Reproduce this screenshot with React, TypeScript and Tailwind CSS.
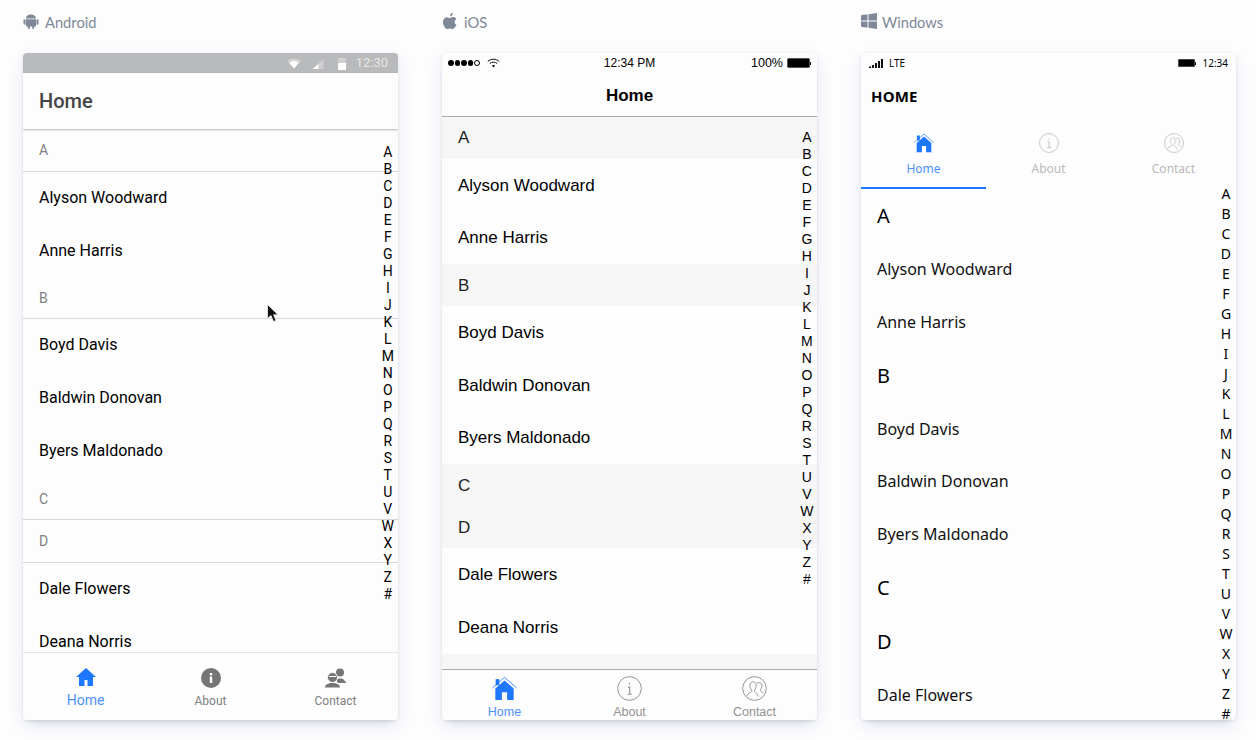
import type { ReactNode } from 'react'

const letters = 'ABCDEFGHIJKLMNOPQRSTUVWXYZ#'.split('')

// list data, same for every platform
// androidHeight: the android headers are not all the same height in the capture
const sections = [
  { title: 'A', androidHeight: 'h-[43px]', names: ['Alyson Woodward', 'Anne Harris'] },
  { title: 'B', androidHeight: 'h-[41px]', names: ['Boyd Davis', 'Baldwin Donovan', 'Byers Maldonado'] },
  { title: 'C', androidHeight: 'h-[42px]', names: [] },
  { title: 'D', androidHeight: 'h-[43px]', names: ['Dale Flowers', 'Deana Norris'] },
]

const BLUE = '#1e78ff'

function HomeSolid({ size }: { size: number }) {
  return (
    <svg width={size} height={size} viewBox="0 0 24 24" fill={BLUE}>
      <path d="M12 3 2 12h3v9h5.500v-6h3v6H19v-9h3z" />
    </svg>
  )
}

// iOS / Windows variant: thin roof line over the house, chimney on the left
function HomeRoof({ size }: { size: number }) {
  return (
    <svg width={size} height={size} viewBox="0 0 24 24" fill={BLUE}>
      <path d="M12 4.300 3.200 12v11h6.300v-7.500h5V23h6.300V12z" />
      <rect x="3.500" y="3" width="3.500" height="6" />
      <path d="M.4 11.500 12 1.300l11.600 10.200" fill="none" stroke={BLUE} strokeWidth="0.8" />
    </svg>
  )
}

function InfoOutline({ size, color }: { size: number; color: string }) {
  return (
    <svg width={size} height={size} viewBox="0 0 26 26" fill="none" stroke={color}>
      <circle cx="13" cy="13" r="12.300" strokeWidth="1" />
      <path d="M13 7v1.800M11.300 11.500H13.200V19M11 19h4.400" strokeWidth="1.200" />
    </svg>
  )
}

function ContactOutline({ size, color }: { size: number; color: string }) {
  return (
    <svg width={size} height={size} viewBox="0 0 26 26" fill="none" stroke={color} strokeWidth="1">
      <circle cx="13" cy="13" r="12.300" />
      <path d="M5 20.500c.5-2.500 4-3 5-4.500.3-.8 0-1.500-.8-2.500C8.300 12 8 10 8.500 8.500 9 6.800 10.200 6 11.500 6s2.500.8 3 2.500c.5 1.500.2 3.500-.7 5-.8 1-1.100 1.700-.8 2.500 1 1.500 3.500 2 4 5.500" />
      <path d="M15.500 7.800c.8-.8 1.600-1 2.300-1 1.500 0 2.500 1 2.800 2.400.3 1.600 0 3-.8 4.100-.7 1-.8 1.500-.5 2.300.6.900 1.800 1.200 2.800 2.300" />
    </svg>
  )
}

function Index({ className, rowClass }: { className: string; rowClass: string }) {
  return (
    <div className={`absolute flex flex-col items-center text-black ${className}`}>
      {letters.map((l) => (
        <div key={l} className={rowClass}>
          {l}
        </div>
      ))}
    </div>
  )
}

function PhoneCard({ children }: { children: ReactNode }) {
  return (
    <div className="relative flex h-[667px] w-[375px] flex-col overflow-hidden rounded-[4px] bg-[#fdfdfe] shadow-[0_1px_3px_rgba(80,90,110,0.16)]">
      {children}
    </div>
  )
}

function Column({ icon, label, children }: { icon: ReactNode; label: string; children: ReactNode }) {
  return (
    <div className="flex w-[375px] flex-col">
      <div className="flex h-[53px] items-start gap-[5px] pt-[13px] font-['Lato',sans-serif] text-[14.700px] leading-[18px] text-[#7f8896]">
        {icon}
        <span>{label}</span>
      </div>
      <div className="rounded-[14px] shadow-[0_8px_6px_-4px_rgba(90,100,125,0.15),0_6px_10px_8px_rgba(125,140,185,0.06)]">
        {children}
      </div>
    </div>
  )
}

function AndroidScreen() {
  return (
    <PhoneCard>
      <div className="flex h-[20px] shrink-0 items-center justify-end bg-[#b9babc] pr-[10px] font-['Roboto',sans-serif] text-[13px] text-[#e6e6e7]">
        <svg width="14" height="11" viewBox="0 0 14 10" className="mr-[11px]">
          <path d="M0 2.500C3.500-.8 10.500-.8 14 2.500L7 10z" fill="#d3d3d5" />
          <path d="M2.500 4.500C5 1.800 9 1.800 11.500 4.500L7 10z" fill="#fff" />
        </svg>
        <svg width="12" height="10" viewBox="0 0 13 12" className="mr-[14px] mt-[1px]">
          <path d="M13 0v12H0z" fill="#cfcfd1" />
          <path d="M7 6v6H0z" fill="#fff" />
        </svg>
        <svg width="8" height="13" viewBox="0 0 8 13" className="mr-[10px]">
          <rect y="1" width="8" height="12" fill="#cfcfd1" />
          <rect y="6" width="8" height="7" fill="#fff" />
        </svg>
        12:30
      </div>
      <div className="z-10 flex h-[56px] shrink-0 items-center bg-[#fdfdfe] pl-[16px] font-['Roboto',sans-serif] text-[20px] font-medium text-[#444] shadow-[0_1px_2px_rgba(0,0,0,0.3)]">
        Home
      </div>
      <div className="min-h-0 flex-1 overflow-hidden font-['Roboto',sans-serif]">
        {sections.map((s) => (
          <div key={s.title}>
            <div className={`flex items-center border-b border-[#d8d8da] pl-[16px] pt-[1px] text-[14px] text-[#808080] ${s.androidHeight}`}>
              {s.title}
            </div>
            {s.names.map((n) => (
              <div key={n} className="flex h-[53px] items-center pb-[2px] pl-[16px] text-[16px] text-black">
                {n}
              </div>
            ))}
          </div>
        ))}
      </div>
      <div className="flex h-[68px] shrink-0 border-t border-[#e6e6e8] bg-[#fdfdfe] font-['Roboto',sans-serif]">
        <div className="flex flex-1 flex-col items-center pt-[12px]">
          <HomeSolid size={24} />
          <span className="mt-[1px] text-[14px] leading-[20px] text-[#4d92ff]">Home</span>
        </div>
        <div className="flex flex-1 flex-col items-center pt-[15px]">
          <svg width="20" height="20" viewBox="0 0 20 20">
            <circle cx="10" cy="10" r="10" fill="#757575" />
            <rect x="8.800" y="8.500" width="2.400" height="6.500" fill="#fff" />
            <rect x="8.800" y="5" width="2.400" height="2.300" fill="#fff" />
          </svg>
          <span className="mt-[4px] text-[12px] leading-[18px] text-[#808080]">About</span>
        </div>
        <div className="flex flex-1 flex-col items-center pt-[15px]">
          <svg width="22" height="20" viewBox="0 0 22 20" fill="#757575">
            <circle cx="15" cy="4.500" r="4" />
            <path d="M11 12c1-2 7-2 8 0l2.500 3H13z" />
            <circle cx="7.500" cy="9.500" r="5" stroke="#fdfdfe" strokeWidth="1" />
            <path d="M0 19.500c0-3 3-4.500 7.500-4.500s7.500 1.500 7.500 4.500z" />
            <path d="M4 8.500h7" stroke="#fdfdfe" strokeWidth="1" />
          </svg>
          <span className="mt-[4px] text-[12px] leading-[18px] text-[#808080]">Contact</span>
        </div>
      </div>
      <Index
        className="right-[4px] top-[91px] font-['Roboto',sans-serif] text-[14px]"
        rowClass="h-[17px] leading-[17px]"
      />
    </PhoneCard>
  )
}

function IosScreen() {
  return (
    <PhoneCard>
      <div className="flex h-[20px] shrink-0 items-center justify-between px-[6px] font-['Liberation_Sans',sans-serif] text-[12px] text-black">
        <div className="flex w-[120px] items-center gap-[1px]">
          <span className="h-[5.500px] w-[5.500px] rounded-full bg-black" />
          <span className="h-[5.500px] w-[5.500px] rounded-full bg-black" />
          <span className="h-[5.500px] w-[5.500px] rounded-full bg-black" />
          <span className="h-[5.500px] w-[5.500px] rounded-full bg-black" />
          <span className="h-[5.500px] w-[5.500px] rounded-full border-[0.5px] border-black" />
          <svg width="13" height="10" viewBox="0 0 13 10" className="ml-[6px]" fill="none" stroke="#111">
            <path d="M.8 3.500c3-3 8.400-3 11.400 0M2.800 5.500c2-1.800 5.400-1.800 7.400 0" />
            <path d="M6.500 9.500 4.800 7.500c1-.8 2.400-.8 3.400 0z" fill="#111" stroke="none" />
          </svg>
        </div>
        <span>12:34 PM</span>
        <div className="flex w-[120px] items-center justify-end gap-[4px]">
          <span className="text-[12.500px]">100%</span>
          <div className="flex items-center">
            <div className="h-[10px] w-[23px] rounded-[1.500px] border border-[#555] bg-black" />
            <div className="h-[3px] w-[1px] bg-black" />
          </div>
        </div>
      </div>
      <div className="flex h-[44px] shrink-0 items-center justify-center border-b border-[#a9a9ab] pt-[3px] font-['Liberation_Sans',sans-serif] text-[17px] font-bold text-black">
        Home
      </div>
      <div className="min-h-0 flex-1 overflow-hidden font-['Liberation_Sans',sans-serif]">
        {sections.map((s) => (
          <div key={s.title}>
            <div className="flex h-[42px] items-center bg-[#f6f6f7] pl-[16px] text-[17px] text-[#222]">
              {s.title}
            </div>
            {s.names.map((n) => (
              <div key={n} className="flex h-[52.670px] items-center pl-[16px] text-[17px] text-black">
                {n}
              </div>
            ))}
          </div>
        ))}
        {/* next section band, its label sits behind the tab bar */}
        <div className="h-[42px] bg-[#f6f6f7]" />
      </div>
      <div className="flex h-[51px] shrink-0 border-t border-[#a9a9ab] bg-[#fdfdfe] font-['Liberation_Sans',sans-serif] text-[12.500px] leading-[14px]">
        <div className="flex flex-1 flex-col items-center pt-[6px] text-[#4d92ff]">
          <HomeRoof size={25} />
          <span className="mt-[4px]">Home</span>
        </div>
        <div className="flex flex-1 flex-col items-center pt-[6px] text-[#929292]">
          <InfoOutline size={25} color="#929292" />
          <span className="mt-[4px]">About</span>
        </div>
        <div className="flex flex-1 flex-col items-center pt-[6px] text-[#929292]">
          <ContactOutline size={25} color="#929292" />
          <span className="mt-[4px]">Contact</span>
        </div>
      </div>
      <Index
        className="right-[3.500px] top-[76px] font-['Liberation_Sans',sans-serif] text-[14px]"
        rowClass="h-[17px] leading-[17px]"
      />
    </PhoneCard>
  )
}

function WindowsScreen() {
  return (
    <PhoneCard>
      <div className="flex h-[20px] shrink-0 items-center justify-between pl-[8px] pr-[8px] font-['Noto_Sans',sans-serif] text-[10px] text-black">
        <div className="flex items-center gap-[6px]">
          <svg width="14" height="9" viewBox="0 0 14 9" fill="#111">
            <rect x="0" y="7.500" width="2" height="1.500" />
            <rect x="3" y="6" width="2" height="3" />
            <rect x="6" y="4" width="2" height="5" />
            <rect x="9" y="2" width="2" height="7" />
            <rect x="12" y="0" width="2" height="9" />
          </svg>
          <span>LTE</span>
        </div>
        <div className="flex items-center gap-[6px]">
          <div className="flex items-center">
            <div className="h-[8px] w-[17px] rounded-[1px] border border-[#444] bg-black" />
            <div className="h-[3px] w-[1px] bg-black" />
          </div>
          <span>12:34</span>
        </div>
      </div>
      <div className="flex h-[45px] shrink-0 items-center pl-[10px] pt-[2px] font-['Noto_Sans',sans-serif] text-[15px] font-bold tracking-[0.2px] text-black">
        HOME
      </div>
      <div className="flex h-[71px] shrink-0 font-['Noto_Sans',sans-serif] text-[12px] leading-[16px]">
        <div className="flex flex-1 flex-col items-center border-b-2 border-[#1e78ff] pt-[15px] text-[#4d92ff]">
          <HomeRoof size={20} />
          <span className="mt-[8px]">Home</span>
        </div>
        <div className="flex flex-1 flex-col items-center pt-[15px] text-[#b8b8b8]">
          <InfoOutline size={20} color="#b8b8b8" />
          <span className="mt-[8px]">About</span>
        </div>
        <div className="flex flex-1 flex-col items-center pt-[15px] text-[#b8b8b8]">
          <ContactOutline size={20} color="#b8b8b8" />
          <span className="mt-[8px]">Contact</span>
        </div>
      </div>
      <div className="min-h-0 flex-1 overflow-hidden font-['Noto_Sans',sans-serif]">
        {sections.map((s) => (
          <div key={s.title}>
            <div className="flex h-[54.300px] items-center pl-[16px] text-[20px] text-black">{s.title}</div>
            {/* the last name falls below the fold here */}
            {s.names
              .filter((n) => n !== 'Deana Norris')
              .map((n) => (
                <div key={n} className="flex h-[52.670px] items-center pb-[1px] pl-[16px] text-[16px] text-[#111]">
                  {n}
                </div>
              ))}
          </div>
        ))}
      </div>
      <Index
        className="right-[3.500px] top-[131px] font-['Noto_Sans',sans-serif] text-[14px]"
        rowClass="h-[20px] leading-[20px]"
      />
    </PhoneCard>
  )
}

export default function App() {
  return (
    <div className="flex h-[740px] w-[1256px] gap-[44px] overflow-hidden bg-[#fdfdfe] pl-[23px]">
      <Column
        label="Android"
        icon={
          <svg width="17" height="16" viewBox="0 0 17 16" fill="#7f8896">
            <path d="M3 5.500C3 3 5.500 1.500 8 1.500S13 3 13 5.500zM3 6.200h10v6.300a1 1 0 0 1-1 1H4a1 1 0 0 1-1-1z" />
            <rect x="0.500" y="6.200" width="2" height="5.500" rx="1" />
            <rect x="13.500" y="6.200" width="2" height="5.500" rx="1" />
            <rect x="4.800" y="12" width="2" height="4" rx="1" />
            <rect x="9.200" y="12" width="2" height="4" rx="1" />
          </svg>
        }
      >
        <AndroidScreen />
      </Column>
      <Column
        label="iOS"
        icon={
          <svg width="17" height="16" viewBox="-1 0 17 16" fill="#7f8896">
            <path d="M10 0c.1 1.600-1.300 3.300-3 3.200C6.800 1.700 8.300.2 10 0zM13.500 11.500c-.8 2-2.300 4.500-3.900 4.500-1 0-1.500-.6-2.700-.6s-1.700.6-2.700.6C2.400 16 0 12.500 0 9c0-3.100 2-4.800 4-4.800 1.200 0 2.100.8 2.900.8.700 0 1.800-.9 3.200-.9 1.100 0 2.500.5 3.300 1.800-2.500 1.500-2.200 4.900.1 5.600z" />
          </svg>
        }
      >
        <IosScreen />
      </Column>
      <Column
        label="Windows"
        icon={
          <svg width="16" height="16" viewBox="0 0 16 16" fill="#7f8896">
            <path d="M0 2.300 6.500 1.300v6.300H0zM7.500 1.200 16 0v7.600H7.500zM0 8.500h6.500v6.200L0 13.700zM7.500 8.500H16V16l-8.500-1.200z" />
          </svg>
        }
      >
        <WindowsScreen />
      </Column>
      {/* mouse pointer from the recording */}
      <svg width="12" height="18" viewBox="0 0 12 18" className="absolute left-[267px] top-[304px]">
        <path d="M.5.500v14l3.500-3 2.500 6 2.500-1-2.500-5.700H11z" fill="#111" stroke="#fff" strokeWidth="0.7" />
      </svg>
    </div>
  )
}
